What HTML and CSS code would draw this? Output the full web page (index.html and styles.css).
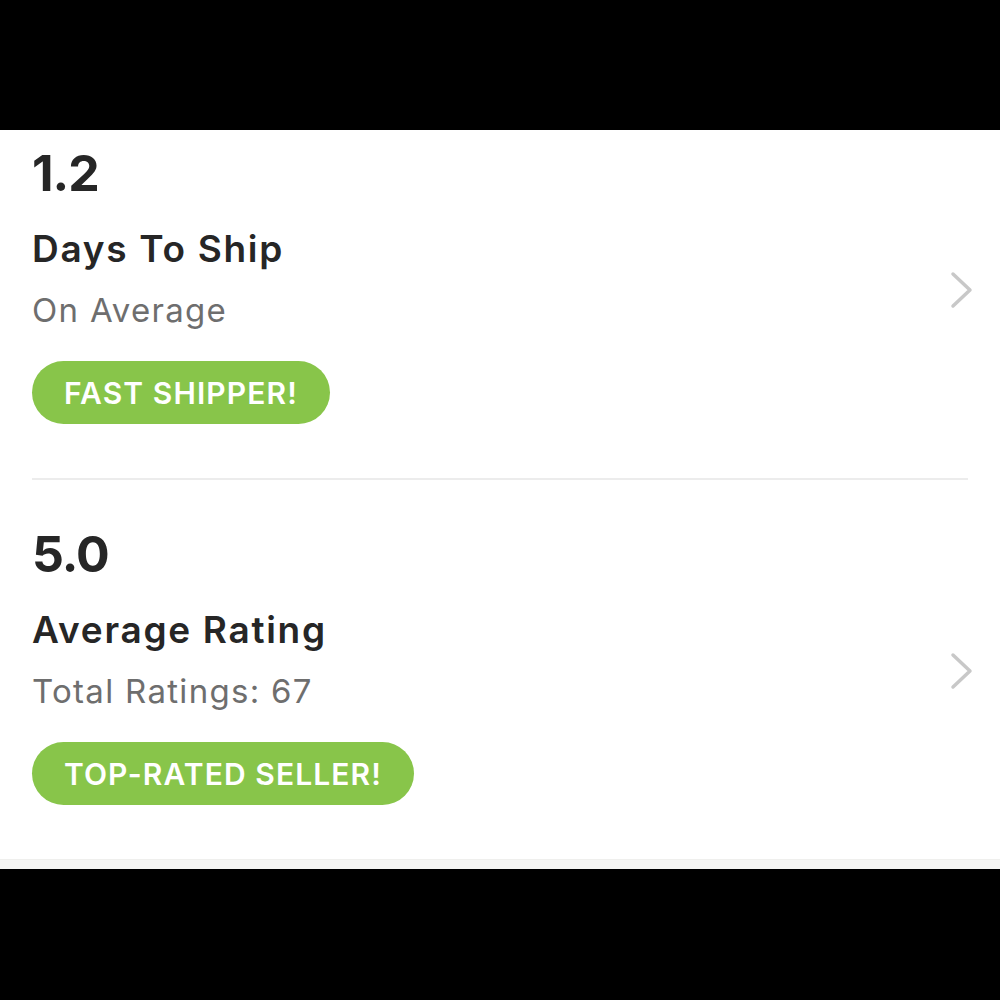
FILE: index.html
```html
<!DOCTYPE html>
<html lang="en">
<head>
<meta charset="utf-8">
<title>Seller stats</title>
<link rel="stylesheet" href="styles.css">
</head>
<body>
<div class="bar-top"></div>
<main class="viewport">
  <div class="list">
    <section class="stat">
      <div class="stat-body">
        <div class="stat-value">1.2</div>
        <div class="stat-title">Days To Ship</div>
        <div class="stat-sub">On Average</div>
        <span class="badge">FAST SHIPPER!</span>
      </div>
      <svg class="chevron" viewBox="0 0 24 38" width="24" height="38" aria-hidden="true"><polyline points="3,3 20,19 3,35" /></svg>
    </section>
    <div class="divider"></div>
    <section class="stat stat-next">
      <div class="stat-body">
        <div class="stat-value">5.0</div>
        <div class="stat-title">Average Rating</div>
        <div class="stat-sub">Total Ratings: 67</div>
        <span class="badge">TOP-RATED SELLER!</span>
      </div>
      <svg class="chevron" viewBox="0 0 24 38" width="24" height="38" aria-hidden="true"><polyline points="3,3 20,19 3,35" /></svg>
    </section>
  </div>
  <div class="strip"></div>
</main>
</body>
</html>
```
FILE: styles.css
```css
html, body {
  margin: 0;
  padding: 0;
  background: #000;
  font-family: "Inter", "Lato", "Liberation Sans", sans-serif;
}
.bar-top {
  height: 130px;
}
.viewport {
  background: #fff;
  overflow: hidden;
}
.list {
  margin-top: -29px;
}
.stat {
  display: flex;
  align-items: center;
  padding: 47px 26px 54px 32px;
}
.stat-next {
  padding-top: 49px;
}
.stat-body {
  flex: 1;
  display: flex;
  flex-direction: column;
  align-items: flex-start;
}
.stat-value {
  font-size: 50px;
  line-height: 50px;
  font-weight: 700;
  color: #262626;
  letter-spacing: -1px;
}
.stat-title {
  margin-top: 32px;
  font-size: 37px;
  line-height: 37px;
  font-weight: 600;
  color: #262626;
  letter-spacing: 1.7px;
}
.stat-sub {
  margin-top: 27px;
  font-size: 33px;
  line-height: 33px;
  font-weight: 400;
  color: #6e6e6e;
  letter-spacing: 1.3px;
}
.badge {
  margin-top: 34px;
  height: 63px;
  padding: 0 32px;
  border-radius: 32px;
  background: #88c54a;
  color: #fff;
  font-size: 30px;
  font-weight: 600;
  letter-spacing: 1.1px;
  display: flex;
  align-items: center;
}
.chevron {
  margin-top: 8px;
  fill: none;
  stroke: #c8c8c8;
  stroke-width: 3.5;
  stroke-linecap: round;
  stroke-linejoin: round;
}
.divider {
  height: 2px;
  margin: 0 32px;
  background: #ececec;
}
.strip {
  height: 9px;
  background: #f6f6f4;
  border-top: 1px solid #efefed;
}
```
